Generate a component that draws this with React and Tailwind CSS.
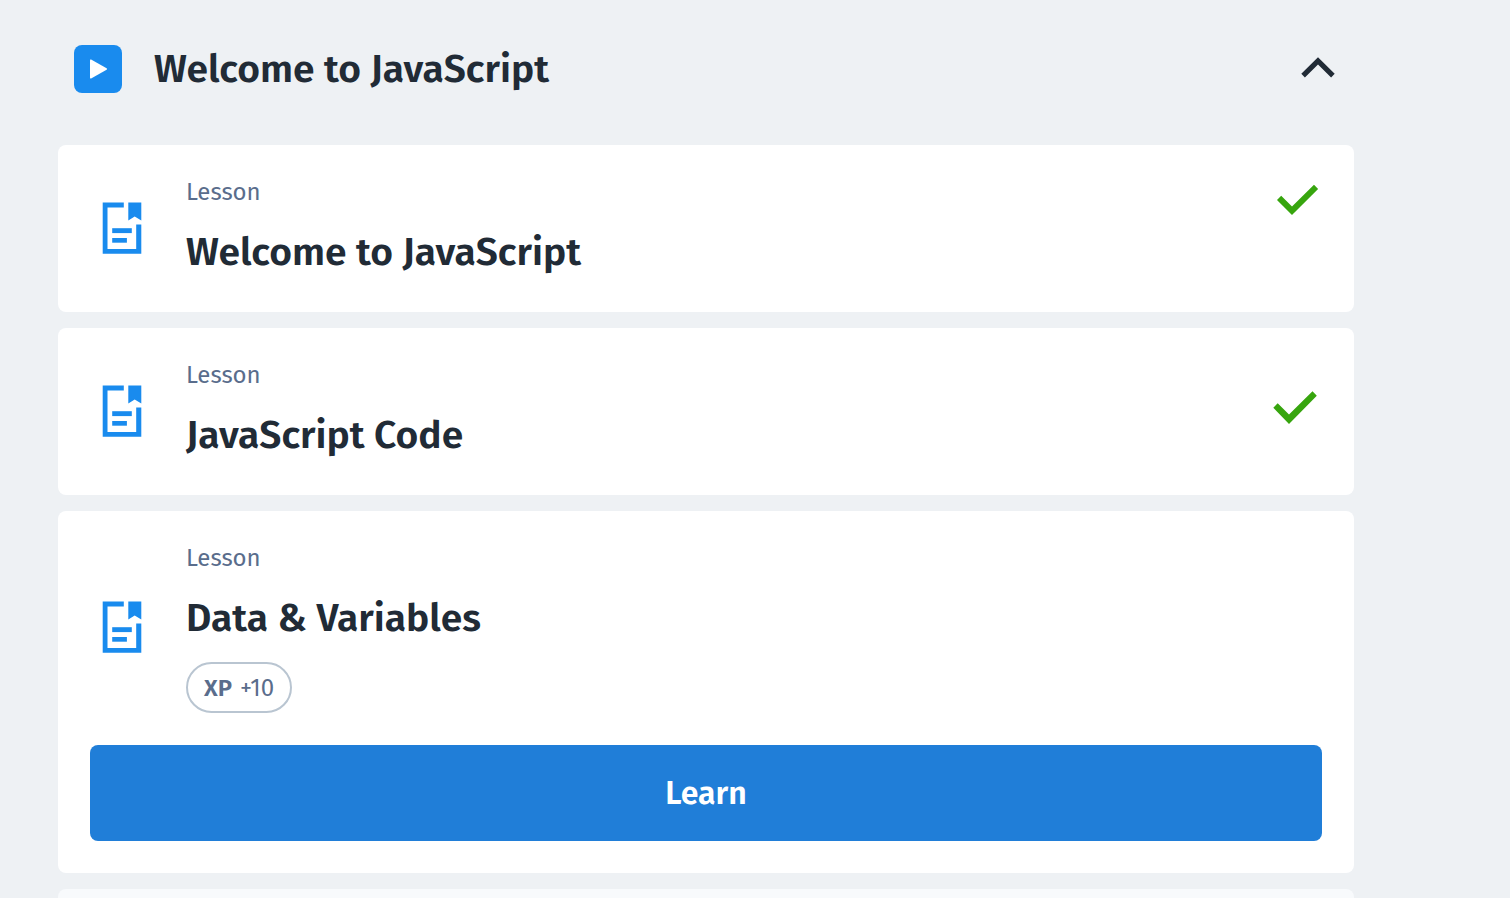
function PlayIcon() {
  return (
    <span className="flex size-12 shrink-0 items-center justify-center rounded-lg bg-[#198bee]">
      <svg viewBox="0 0 48 48" className="size-12" aria-hidden="true">
        <path d="M16 15.2Q16 14 17.1 14.6L32.6 23.3Q33.6 24 32.6 24.7L17.1 33.4Q16 34 16 32.8Z" fill="#fff" />
      </svg>
    </span>
  );
}

function ChevronUp() {
  return (
    <svg viewBox="0 0 40 40" className="size-10 shrink-0" aria-hidden="true">
      <path d="M20 8.2L36.7 24.8L33.1 28.4L20 15.4L6.9 28.4L3.3 24.8Z" fill="#212b36" />
    </svg>
  );
}

function LessonIcon() {
  return (
    <svg viewBox="0 0 64 64" className="size-16 shrink-0" fill="#198bee" aria-hidden="true">
      <path d="M12.7 5.5H33.8V10.4H17.5V52H46.2V27.6H51.3V56.8H12.7Z" />
      <path d="M38.3 5.5H51.3V23.6L44.7 19.6L38.3 23.6Z" />
      <path d="M22.2 31.2H41.8V36.1H22.2Z" />
      <path d="M22.2 41H36.9V45.7H22.2Z" />
    </svg>
  );
}

function CheckSmall() {
  return (
    <svg viewBox="0 0 48 48" className="size-12 shrink-0 self-start overflow-visible" role="img" aria-label="Completed">
      <path d="M3 23L7.2 18.7L18 29.5L40 7.8L44.1 11.9L18 38.1Z" fill="#37a50e" />
    </svg>
  );
}

function CheckLarge() {
  return (
    <svg viewBox="0 0 48 48" className="size-12 shrink-0 overflow-visible" role="img" aria-label="Completed">
      <path d="M-0.7 19.8L3.7 15.3L15 26.5L38.5 3.3L42.8 7.7L15 36Z" fill="#37a50e" />
    </svg>
  );
}

function LessonCard({ title, xp, check, action }) {
  return (
    <li className="rounded-lg bg-white p-8">
      <div className="flex items-center gap-8">
        <LessonIcon />
        <div className="min-w-0 flex-1">
          <p className="text-2xl leading-[30px] text-[#5a6d8c]">Lesson</p>
          <h3 className="mt-[18px] text-[39px] leading-[55px] font-semibold">{title}</h3>
          {xp && (
            <p className="mt-4 inline-flex h-[51px] items-center gap-2 rounded-full border-2 border-[#b9c5d1] px-4 align-top text-2xl text-[#5a6d8c]">
              <span className="font-semibold">XP</span>
              <span>{xp}</span>
            </p>
          )}
        </div>
        {check}
      </div>
      {action && (
        <button type="button" className="mt-8 h-24 w-full rounded-lg bg-[#207ed8] text-[32px] font-semibold text-white">
          {action}
        </button>
      )}
    </li>
  );
}

export default function App() {
  return (
    <main className="h-screen overflow-hidden bg-[#eef1f4] pr-[156px] pl-[58px] font-['Fira_Sans','Noto_Sans',sans-serif] text-[#212b36]">
      <h2 className="pt-8">
        <button type="button" aria-expanded="true" aria-label="Welcome to JavaScript" className="flex h-[74px] w-full items-center gap-8 px-4 text-left">
          <PlayIcon />
          <span className="flex-1 text-[39px] font-semibold">Welcome to JavaScript</span>
          <ChevronUp />
        </button>
      </h2>
      <ul className="mt-[39px] space-y-4">
        <LessonCard title="Welcome to JavaScript" check={<CheckSmall />} />
        <LessonCard title="JavaScript Code" check={<CheckLarge />} />
        <LessonCard title="Data & Variables" xp="+10" action="Learn" />
        <li className="h-40 rounded-lg bg-[#f8fafc]" />
      </ul>
    </main>
  );
}
